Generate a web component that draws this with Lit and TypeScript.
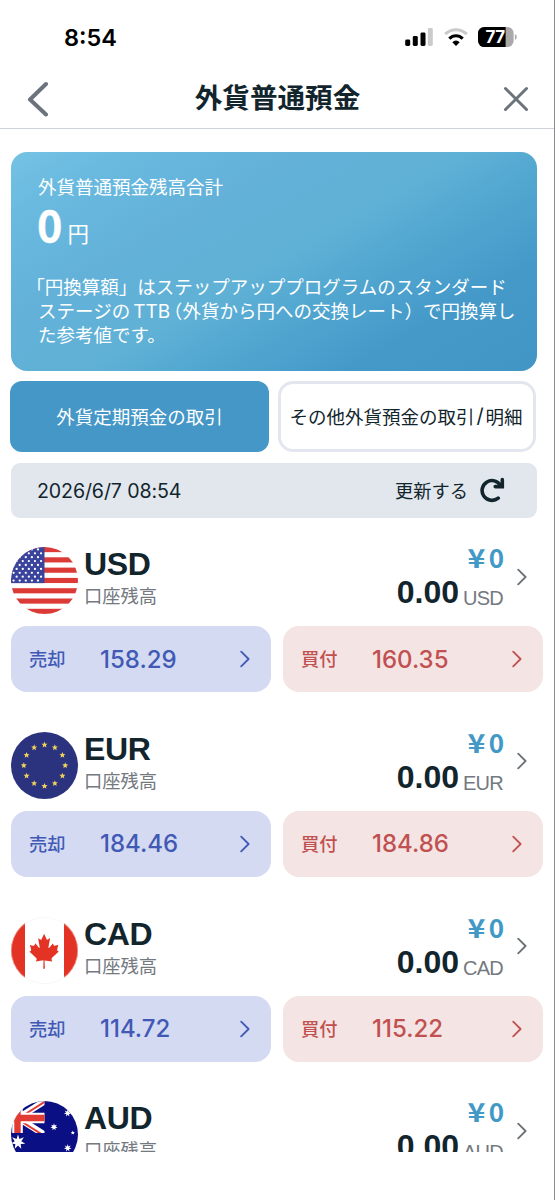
import { LitElement, html, css, svg, nothing } from "lit";
import { customElement, property } from "lit/decorators.js";

const star = (cx: number, cy: number, points: number, outer: number, inner: number) => {
  const out: string[] = [];
  for (let i = 0; i < points * 2; i++) {
    const r = i % 2 ? inner : outer;
    const a = (Math.PI * i) / points - Math.PI / 2;
    out.push(`${(cx + r * Math.cos(a)).toFixed(2)},${(cy + r * Math.sin(a)).toFixed(2)}`);
  }
  return out.join(" ");
};

const usStars = () => {
  const dots = [];
  for (let row = 0; row < 9; row++) {
    for (let col = 0; col < 6; col++) {
      const x = 2.6 + col * 6.1 + (row % 2 ? 3.05 : 0);
      if (x < 33) dots.push(svg`<circle cx=${x} cy=${2.4 + row * 3.9} r="1.15" fill="#fff"/>`);
    }
  }
  return dots;
};

const flags: Record<string, () => unknown> = {
  USD: () => svg`
    <rect width="67" height="67" fill="#fff"/>
    ${[0, 1, 2, 3, 4, 5, 6].map((i) => svg`<rect y=${i * 10.3} width="67" height="5.15" fill="#dc3a36"/>`)}
    <rect width="33.5" height="36.1" fill="#3a449c"/>${usStars()}`,
  EUR: () => svg`
    <rect width="67" height="67" fill="#2b337f"/>
    ${Array.from({ length: 12 }, (_, i) => {
      const a = (i * Math.PI) / 6;
      return svg`<polygon points=${star(33.5 + 20.7 * Math.sin(a), 33.5 - 20.7 * Math.cos(a), 5, 3.2, 1.4)} fill="#eed25a"/>`;
    })}`,
  CAD: () => svg`
    <rect width="67" height="67" fill="#fff"/>
    <rect width="14" height="67" fill="#e23325"/><rect x="53" width="14" height="67" fill="#e23325"/>
    <circle cx="33.5" cy="33.5" r="33.2" fill="none" stroke="#f6e6e6" stroke-width=".5"/>
    <g transform="translate(33.5 34.3) scale(.1155 .126) translate(-319 -235)"><path fill="#e23325" d="m201 232-13.3 4.4 61.4 54c4.7 13.7-1.6 17.8-5.6 25l66.6-8.4-1.6 67 13.9-.3-3.1-66.6 66.7 8c-4.1-8.7-7.8-13.3-4-27.2l61.3-51-10.7-4c-8.8-6.8 3.8-32.6 5.6-48.9 0 0-35.7 12.3-38 5.8l-9.2-17.5-32.6 35.8c-3.5.9-5-.5-5.9-3.5l15-74.8-23.8 13.4c-2 .9-4 .1-5.2-2.2l-23-46-23.6 47.8c-1.8 1.7-3.6 1.9-5 .7L264 130.8l13.7 74.1c-1.1 3-3.7 3.8-6.7 2.2l-31.2-35.3c-4 6.5-6.8 17.1-12.2 19.5-5.4 2.3-23.5-4.5-35.6-7 4.2 14.8 17 39.6 9 47.7z"/></g>`,
  AUD: () => svg`
    <rect width="67" height="67" fill="#0b0f84"/>
    <clipPath id="canton"><rect x="0" y="0" width="33.5" height="32"/></clipPath>
    <g clip-path="url(#canton)">
      <path d="M-20 34 34 0M-20 0 34 34" stroke="#fff" stroke-width="6.4"/>
      <path d="M6.5 18 35 0M6.5 18 35 36" stroke="#e23b33" stroke-width="2"/>
      <path d="M6.5 0V34M0 17H34" stroke="#fff" stroke-width="10.6"/>
      <path d="M6.5 0V34M0 17H34" stroke="#e23b33" stroke-width="6.4"/>
    </g>
    <polygon points=${star(7, 41, 7, 7.5, 3.4)} fill="#fff"/>
    <polygon points=${star(43, 26, 7, 3.7, 1.7)} fill="#fff"/>
    <polygon points=${star(56.7, 12, 7, 3.9, 1.7)} fill="#fff"/>
    <polygon points=${star(56.7, 47, 7, 3.9, 1.7)} fill="#fff"/>
    <polygon points=${star(61.8, 31.7, 5, 2.2, 1)} fill="#fff"/>`,
};

const chevron = html`<svg class="chev" width="10" height="18" viewBox="0 0 10 18" fill="none" stroke="currentColor" stroke-width="1.8" stroke-linecap="round" stroke-linejoin="round"><path d="M1.2 1.6 8.6 9 1.2 16.4"/></svg>`;

@customElement("currency-row")
export class CurrencyRow extends LitElement {
  @property() code = "";
  @property() sell = "";
  @property() buy = "";

  static styles = css`
    :host { display: block; }
    svg { display: block; flex: none; }
    .head { display: flex; height: 67px; }
    .flag { border-radius: 50%; }
    .name { margin: -1px 0 0 6px; flex: 1; }
    .code { font: bold 32px/36px "Liberation Sans", sans-serif; letter-spacing: -0.4px; color: #12252d; }
    .sub { font-size: 18.3px; line-height: 26px; color: #74797f; }
    .amounts { display: flex; flex-direction: column; align-items: flex-end; }
    .yen { display: flex; align-items: baseline; font: bold 26px/38px "Noto Sans CJK JP", sans-serif; color: #4399c6; height: 38px; margin: -9px 0 0 0; }
    .mark { transform: scaleX(1.17); transform-origin: 100% 50%; margin-right: 3px; }
    .bal { display: flex; align-items: baseline; font: bold 32px/38px "Liberation Sans", sans-serif; color: #12252d; margin-top: -3px; }
    .unit { font-size: 20px; font-weight: 400; color: #74797f; margin-left: 4px; width: 41px; letter-spacing: -0.8px; transform: translateY(2px); }
    .go { margin: 20.5px 27px 0 13px; color: #6b7075; }
    .rates { display: grid; grid-template-columns: 260px 260px; gap: 12px; margin-top: 12px; }
    .rate { display: flex; align-items: center; height: 66px; border-radius: 16px; padding: 0 21.5px 0 18px; box-sizing: border-box; }
    .sell { background: #d3daf2; color: #4159b5; }
    .buy { background: #f5e4e4; color: #c05150; }
    .label { width: 71px; font-size: 18.3px; font-weight: 500; padding-bottom: 2px; }
    .value { flex: 1; font: 550 24px/30px Inter, sans-serif; padding-top: 1px; }
  `;

  render() {
    return html`
      <div class="head">
        <svg class="flag" width="67" height="67" viewBox="0 0 67 67">${flags[this.code]?.()}</svg>
        <div class="name"><div class="code">${this.code}</div><div class="sub">口座残高</div></div>
        <div class="amounts">
          <div class="yen"><span class="mark">¥</span>0</div>
          <div class="bal">0.00<span class="unit">${this.code}</span></div>
        </div>
        <div class="go">${chevron}</div>
      </div>
      ${this.sell
        ? html`<div class="rates">
            <div class="rate sell"><span class="label">売却</span><span class="value">${this.sell}</span>${chevron}</div>
            <div class="rate buy"><span class="label">買付</span><span class="value">${this.buy}</span>${chevron}</div>
          </div>`
        : nothing}`;
  }
}

@customElement("app-root")
export class AppRoot extends LitElement {
  static styles = css`
    :host { display: block; box-sizing: border-box; width: 555px; height: 1200px; overflow: hidden; background: #fff; border-right: 1px solid #8d8d8f; color: #12252d; font-family: "Noto Sans CJK JP", sans-serif; }
    svg { display: block; flex: none; }
    .status { display: flex; align-items: center; height: 74px; padding: 0 36px 0 64px; box-sizing: border-box; }
    .time { flex: 1; font: 600 23.5px/30px Inter, sans-serif; color: #000; padding-top: 1px; }
    .signal { margin-right: 10px; }
    .wifi { margin-right: 10px; }
    .batt { font: 700 17px Inter, sans-serif; letter-spacing: -0.5px; }
    .title { display: flex; align-items: center; height: 55px; padding: 0 25px 5px 27px; border-bottom: 1px solid #ced3d9; box-sizing: border-box; }
    h1 { flex: 1; margin: 0; padding: 0 0 5px 2px; text-align: center; font-size: 27.6px; line-height: 44px; font-weight: 600; }
    .card { margin: 23px 17px 0 11px; height: 219px; box-sizing: border-box; border-radius: 16px; padding: 21px 20px 0 27px; color: #fff; background: linear-gradient(150deg, #75c2e3 0%, #6abae0 12%, #63b1d9 32%, #60b1d6 50%, #53a8d1 61%, #4499c9 79%, #4296c6 100%); }
    .total { font-size: 18.5px; line-height: 26px; }
    .sum { display: flex; align-items: baseline; height: 48px; line-height: 48px; margin: 0 0 0 -1px; }
    .zero { font-size: 43px; font-weight: 700; -webkit-text-stroke: 0.4px; }
    .en { font-size: 21.5px; margin-left: 5px; }
    .note { margin-top: 27.4px; font-size: 18.5px; line-height: 24px; white-space: nowrap; text-spacing-trim: space-all; }
    .open { font-feature-settings: "halt"; margin-left: -2.5px; }
    .ttb { font-family: Inter, sans-serif; font-size: 19px; line-height: 20px; margin: 0 3px 0 3px; }
    .mid { font-feature-settings: "halt"; }
    .tabs { display: flex; gap: 9px; padding: 10px 0 0 10px; }
    .tab { display: flex; align-items: center; justify-content: center; box-sizing: border-box; height: 71px; border-radius: 12px; font-size: 18.5px; white-space: nowrap; padding-bottom: 2px; }
    .on { width: 259px; background: #4497c6; color: #fff; }
    .off { width: 258px; border: 3px solid #e3e6ee; border-radius: 15px; padding-right: 2px; }
    .slash { font-family: Inter, sans-serif; font-size: 20px; margin: 0 2px; }
    .bar { display: flex; align-items: center; margin: 11px 17px 0 11px; height: 55px; padding: 0 32px 0 26px; border-radius: 9px; background: #e2e7ee; box-sizing: border-box; }
    .date { flex: 1; font: 400 19.6px/26px Inter, sans-serif; letter-spacing: -0.12px; }
    .upd { font-size: 18.3px; margin-right: 12px; padding-bottom: 2px; }
    .again { margin-bottom: 2px; }
    .list { display: flex; flex-direction: column; gap: 39.8px; margin: 20px 0 0 11px; padding-top: 9px; box-sizing: border-box; height: 613.5px; overflow: hidden; }
  `;

  rows = [
    ["USD", "158.29", "160.35"],
    ["EUR", "184.46", "184.86"],
    ["CAD", "114.72", "115.22"],
    ["AUD", "", ""],
  ];

  render() {
    return html`
      <div class="status">
        <div class="time">8:54</div>
        <svg class="signal" width="29" height="20" viewBox="0 0 29 20">
          <rect x=".2" y="12.5" width="5" height="6.5" rx="1.4"/><rect x="7.8" y="9" width="5" height="10" rx="1.4"/>
          <rect x="15.5" y="5.4" width="5" height="13.6" rx="1.4"/><rect x="22.8" y="1" width="5" height="18" rx="1.4" fill="#cbcbcb"/>
        </svg>
        <svg class="wifi" width="24" height="20" viewBox="0 0 24 20" fill="none" stroke-width="3.1">
          <path d="M1.2 7.2C7.4 1.2 16.6 1.2 22.8 7.2" stroke="#cbcbcb"/>
          <path d="M5.3 11.6C9.2 7.7 14.8 7.7 18.7 11.6" stroke="#000"/>
          <path d="M12 19 8.3 15.2Q12 12 15.7 15.2Z" fill="#000"/>
        </svg>
        <svg class="batt" width="40" height="20" viewBox="0 0 40 20">
          <clipPath id="b"><rect width="35.6" height="20" rx="6.3"/></clipPath>
          <g clip-path="url(#b)"><rect width="36" height="20" fill="#a9a9a9"/><rect width="27.6" height="20"/></g>
          <path d="M36.9 7Q38.8 8 38.8 10T36.9 13Z" fill="#a9a9a9"/>
          <text x="17" y="16" text-anchor="middle" fill="#fff">77</text>
        </svg>
      </div>
      <div class="title">
        <svg width="23" height="36" viewBox="0 0 23 36" fill="none" stroke="#6b737c" stroke-width="4" stroke-linecap="round" stroke-linejoin="round"><path d="M19 3 3 18.5 19 33.5"/></svg>
        <h1>外貨普通預金</h1>
        <svg width="26" height="26" viewBox="0 0 26 26" stroke="#6b737c" stroke-width="3" stroke-linecap="round"><path d="M2.5 2.5 23.5 23.5M23.5 2.5 2.5 23.5"/></svg>
      </div>
      <div class="card">
        <div class="total">外貨普通預金残高合計</div>
        <div class="sum"><span class="zero">0</span><span class="en">円</span></div>
        <div class="note">
          <div><span class="open">「</span>円換算額」はステップアッププログラムのスタンダード</div>
          <div>ステージの<span class="ttb">TTB</span><span class="mid">（</span>外貨から円への交換レート）で円換算し</div>
          <div>た参考値です。</div>
        </div>
      </div>
      <div class="tabs">
        <div class="tab on">外貨定期預金の取引</div>
        <div class="tab off">その他外貨預金の取引<span class="slash">/</span>明細</div>
      </div>
      <div class="bar">
        <span class="date">2026/6/7 08:54</span><span class="upd">更新する</span>
        <svg class="again" width="25" height="26" viewBox="0 0 25 26" fill="none" stroke="#12252d" stroke-width="3.6" stroke-linecap="round" stroke-linejoin="round"><path d="M18.2 21.2A9.9 9.9 0 1 1 20.6 8.6"/><path d="M22.3 2.6V9.6H15.2" stroke-linejoin="miter"/></svg>
      </div>
      <div class="list">
        ${this.rows.map(([c, s, b]) => html`<currency-row code=${c} sell=${s} buy=${b}></currency-row>`)}
      </div>`;
  }
}
